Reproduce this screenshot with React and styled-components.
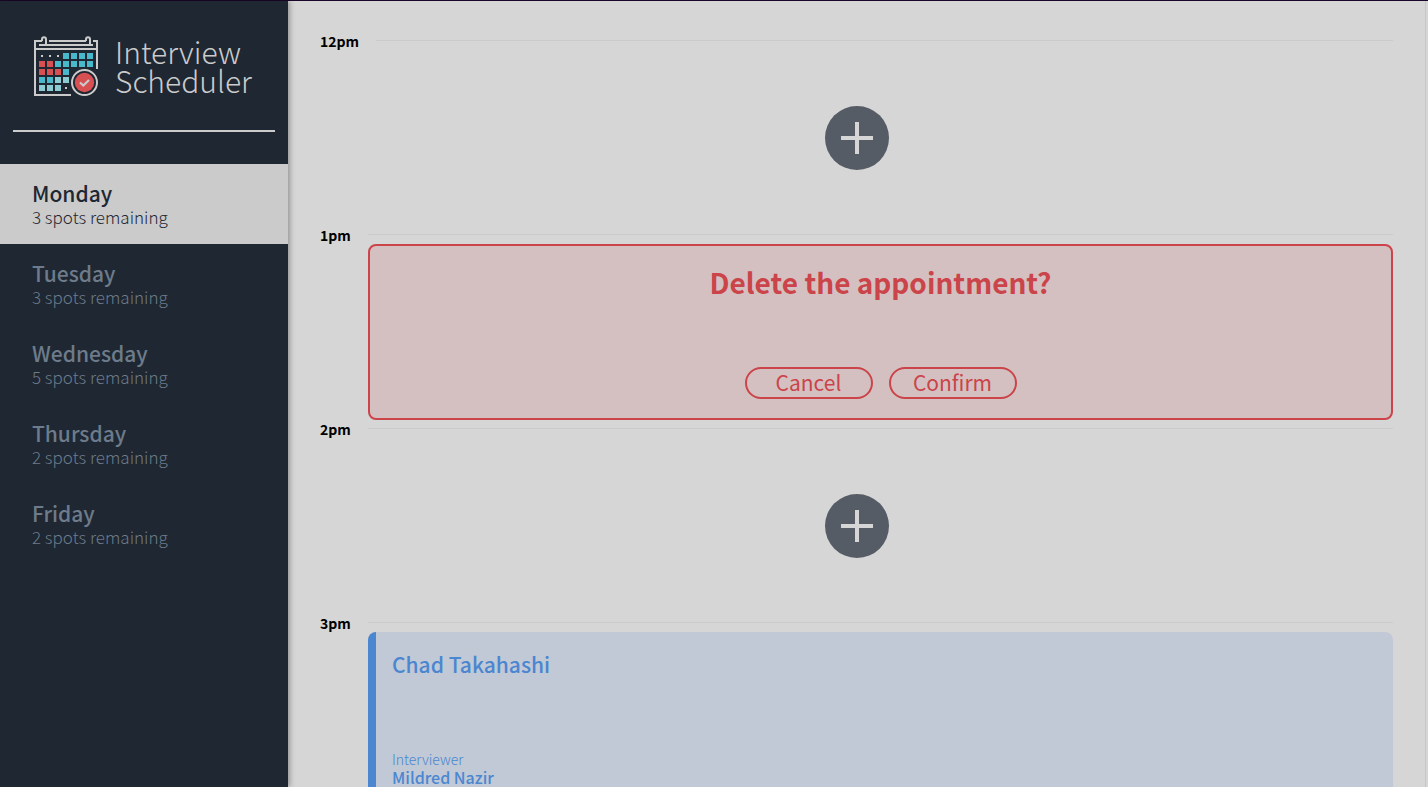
import React, { useState } from "react";
import styled, { createGlobalStyle, css } from "styled-components";

const GlobalStyle = createGlobalStyle`
  *, *::before, *::after { box-sizing: border-box; }
  body {
    margin: 0;
    background: #d6d6d6;
    color: #000;
    font-family: "Noto Sans CJK JP", "Noto Sans", sans-serif;
  }
  button { font-family: inherit; }
`;

const Layout = styled.div`
  display: flex;
  height: 100vh;
  border-top: 1px solid #1a0628;
`;

const Sidebar = styled.section`
  flex: 0 0 288px;
  z-index: 1;
  background: #1e2732;
  box-shadow: 2px 0 5px rgba(0, 0, 0, 0.3);
`;

const Brand = styled.header`
  display: flex;
  align-items: center;
  gap: 16px;
  height: 129px;
  padding: 0 32px 0 34px;
`;

const BrandName = styled.h1`
  margin: 0;
  color: #cbcbcb;
  font-size: 30px;
  font-weight: 300;
  line-height: 29px;
`;

const Divider = styled.hr`
  height: 2px;
  margin: 0 13px 32px;
  border: 0;
  background: #cbcbcb;
`;

const DayList = styled.ul`
  margin: 0;
  padding: 0;
  list-style: none;
`;

const DayButton = styled.button`
  display: flex;
  flex-direction: column;
  justify-content: center;
  width: 100%;
  height: 80px;
  padding: 2px 32px 0;
  border: 0;
  background: transparent;
  color: #6d7b8a;
  text-align: left;
  cursor: pointer;
  ${({ $selected }) =>
    $selected &&
    css`
      background: #cbcbcb;
      color: #1e2732;
    `}
`;

const DayName = styled.span`
  font-size: 21px;
  font-weight: 500;
  line-height: 24px;
`;

const DaySpots = styled.span`
  font-size: 17px;
  font-weight: 300;
  line-height: 24px;
`;

const Schedule = styled.main`
  flex: 1;
  min-width: 0;
  margin-right: 2px;
  padding: 31px 32px;
  overflow-y: auto;
  scrollbar-width: none;
  border-right: 1px solid #c6c6c6;
`;

const SlotHeader = styled.header`
  display: flex;
  align-items: center;
  gap: 17px;
  height: 18px;
`;

const Time = styled.h4`
  margin: 0;
  font-size: 14px;
  font-weight: 700;
  line-height: 18px;
`;

const Rule = styled.hr`
  flex: 1;
  height: 1px;
  margin: 0 0 2px;
  border: 0;
  background: #cbcbcb;
`;

const EmptySlot = styled.div`
  display: flex;
  align-items: center;
  justify-content: center;
  height: 176px;
`;

const AddButton = styled.button`
  display: flex;
  align-items: center;
  justify-content: center;
  width: 64px;
  height: 64px;
  padding: 0;
  border: 0;
  border-radius: 50%;
  background: #555c66;
  color: #d6d6d6;
  cursor: pointer;
`;

const ConfirmCard = styled.div`
  display: flex;
  flex-direction: column;
  align-items: center;
  justify-content: space-between;
  height: 176px;
  margin-left: 48px;
  padding: 20px 24px 19px;
  border: 2px solid #cb444a;
  border-radius: 8px;
  background: #d4c0c1;
  color: #cb444a;
`;

const ConfirmTitle = styled.h2`
  margin: 0;
  font-size: 28px;
  font-weight: 700;
  line-height: 32px;
`;

const Actions = styled.div`
  display: flex;
  gap: 16px;
`;

const ActionButton = styled.button`
  width: 128px;
  height: 32px;
  padding: 0 0 2px;
  border: 2px solid #cb444a;
  border-radius: 16px;
  background: transparent;
  color: #cb444a;
  font-size: 21px;
  font-weight: 400;
  line-height: 24px;
  cursor: pointer;
`;

const AppointmentCard = styled.div`
  display: flex;
  flex-direction: column;
  justify-content: space-between;
  height: 176px;
  margin-left: 48px;
  padding: 16px 16px 21px;
  border-left: 8px solid #4a87d0;
  border-radius: 8px;
  background: #c1c8d6;
  color: #4a87d0;
`;

const Student = styled.h2`
  margin: 0;
  font-size: 21px;
  font-weight: 500;
  line-height: 32px;
`;

const InterviewerLabel = styled.h4`
  margin: 0;
  font-size: 14px;
  font-weight: 300;
  line-height: 16px;
`;

const InterviewerName = styled.h3`
  margin: 0;
  font-size: 16px;
  font-weight: 500;
  line-height: 20px;
`;

const TEAL = "#49b8ca";
const LIGHT = "#8ccbd2";
const RED = "#d95053";
const CALENDAR = [
  [null, null, null, TEAL, TEAL, TEAL, TEAL],
  [RED, RED, TEAL, TEAL, TEAL, TEAL, TEAL],
  [RED, RED, RED, TEAL],
  [TEAL, TEAL, LIGHT, LIGHT],
  [LIGHT, LIGHT, LIGHT, null],
];

function CalendarLogo() {
  return (
    <svg width="65" height="60" viewBox="0 0 65 60" fill="none" aria-hidden="true">
      <g stroke="#cbcbcb" strokeWidth="2">
        <path d="M37 59H1V5H8M15 5H52M59 5H63V33" />
        <path d="M5 9H59M1 13H63" />
        <path d="M8 5V3.5C8 .5 12 .5 12 3.5V8M52 5V3.5C52 .5 56 .5 56 3.5V8" />
      </g>
      {CALENDAR.map((row, r) =>
        row.map((fill, c) =>
          fill ? (
            <rect key={`${r}-${c}`} x={5 + c * 8} y={17 + r * 8} width="6" height="6" fill={fill} />
          ) : (
            <rect key={`${r}-${c}`} x={7 + c * 8} y={19 + r * 8} width="2" height="2" fill="#cbcbcb" />
          )
        )
      )}
      <circle cx="50.5" cy="46.5" r="12.5" fill="#1e2732" stroke="#cbcbcb" strokeWidth="2" />
      <circle cx="50.5" cy="46.5" r="9.7" fill={RED} />
      <path d="M46 46.5L49.3 49.5L55 44" stroke="#cbcbcb" strokeWidth="2.2" />
    </svg>
  );
}

function Slot({ time, children }) {
  return (
    <article>
      <SlotHeader>
        <Time>{time}</Time>
        <Rule />
      </SlotHeader>
      {children}
    </article>
  );
}

function Empty() {
  return (
    <EmptySlot>
      <AddButton aria-label="Add appointment">
        <svg width="32" height="32" viewBox="0 0 32 32" aria-hidden="true">
          <path d="M16 0V32M0 16H32" stroke="currentColor" strokeWidth="4" />
        </svg>
      </AddButton>
    </EmptySlot>
  );
}

const DAYS = [
  { name: "Monday", spots: 3 },
  { name: "Tuesday", spots: 3 },
  { name: "Wednesday", spots: 5 },
  { name: "Thursday", spots: 2 },
  { name: "Friday", spots: 2 },
];

export default function App() {
  const [day, setDay] = useState("Monday");
  return (
    <>
      <GlobalStyle />
      <Layout>
        <Sidebar>
          <Brand>
            <CalendarLogo />
            <BrandName>
              Interview
              <br />
              Scheduler
            </BrandName>
          </Brand>
          <Divider />
          <nav>
            <DayList>
              {DAYS.map(({ name, spots }) => (
                <li key={name}>
                  <DayButton $selected={name === day} onClick={() => setDay(name)}>
                    <DayName>{name}</DayName>
                    <DaySpots>{spots} spots remaining</DaySpots>
                  </DayButton>
                </li>
              ))}
            </DayList>
          </nav>
        </Sidebar>
        <Schedule>
          <Slot time="12pm">
            <Empty />
          </Slot>
          <Slot time="1pm">
            <ConfirmCard>
              <ConfirmTitle>Delete the appointment?</ConfirmTitle>
              <Actions>
                <ActionButton>Cancel</ActionButton>
                <ActionButton>Confirm</ActionButton>
              </Actions>
            </ConfirmCard>
          </Slot>
          <Slot time="2pm">
            <Empty />
          </Slot>
          <Slot time="3pm">
            <AppointmentCard>
              <Student>Chad Takahashi</Student>
              <div>
                <InterviewerLabel>Interviewer</InterviewerLabel>
                <InterviewerName>Mildred Nazir</InterviewerName>
              </div>
            </AppointmentCard>
          </Slot>
        </Schedule>
      </Layout>
    </>
  );
}
